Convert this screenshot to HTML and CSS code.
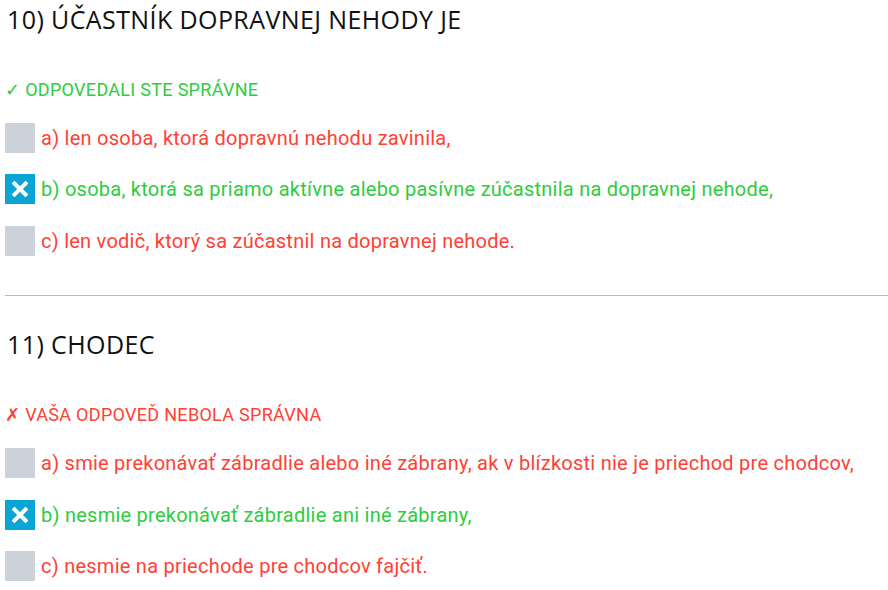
FILE: index.html
```html
<!DOCTYPE html>
<html lang="sk">
<head>
<meta charset="utf-8">
<link rel="stylesheet" href="styles.css">
</head>
<body>
<div class="page">
  <section class="question">
    <h2 class="q-title">10) ÚČASTNÍK DOPRAVNEJ NEHODY JE</h2>
    <div class="status ok"><span class="mark">✓</span> ODPOVEDALI STE SPRÁVNE</div>
    <ul class="answers">
      <li class="answer wrong"><span class="box"></span><span class="txt">a) len osoba, ktorá dopravnú nehodu zavinila,</span></li>
      <li class="answer right"><span class="box checked"><svg viewBox="0 0 30 30" width="30" height="30"><path d="M9.5 9.5 L20.5 20.5 M20.5 9.5 L9.5 20.5" stroke="#fff" stroke-width="4" stroke-linecap="square"/></svg></span><span class="txt">b) osoba, ktorá sa priamo aktívne alebo pasívne zúčastnila na dopravnej nehode,</span></li>
      <li class="answer wrong"><span class="box"></span><span class="txt">c) len vodič, ktorý sa zúčastnil na dopravnej nehode.</span></li>
    </ul>
  </section>
  <hr class="divider">
  <section class="question second">
    <h2 class="q-title">11) CHODEC</h2>
    <div class="status bad"><span class="mark">✗</span> VAŠA ODPOVEĎ NEBOLA SPRÁVNA</div>
    <ul class="answers">
      <li class="answer wrong"><span class="box"></span><span class="txt">a) smie prekonávať zábradlie alebo iné zábrany, ak v blízkosti nie je priechod pre chodcov,</span></li>
      <li class="answer right"><span class="box checked"><svg viewBox="0 0 30 30" width="30" height="30"><path d="M9.5 9.5 L20.5 20.5 M20.5 9.5 L9.5 20.5" stroke="#fff" stroke-width="4" stroke-linecap="square"/></svg></span><span class="txt">b) nesmie prekonávať zábradlie ani iné zábrany,</span></li>
      <li class="answer wrong"><span class="box"></span><span class="txt">c) nesmie na priechode pre chodcov fajčiť.</span></li>
    </ul>
  </section>
</div>
</body>
</html>
```

FILE: styles.css
```css
html, body {
  margin: 0;
  padding: 0;
  background: #fff;
}
.page {
  padding: 1.5px 0 0 5px;
}
.question {
  display: flex;
  flex-direction: column;
}
.q-title {
  font-family: "Open Sans", sans-serif;
  font-weight: 400;
  font-size: 25px;
  line-height: 34px;
  letter-spacing: 0.4px;
  color: #111;
  margin: 0 0 0 2px;
}
.second .q-title {
  margin-top: 31.5px;
}
.status {
  font-family: Roboto, sans-serif;
  font-size: 18px;
  line-height: 20px;
  height: 20px;
  margin-top: 44px;
  letter-spacing: 0.3px;
  white-space: nowrap;
}
.mark {
  font-family: "DejaVu Sans", sans-serif;
  font-size: 18px;
  line-height: 1;
}
.status.ok { color: #2ecc40; }
.status.bad { color: #ff4136; }
.answers {
  list-style: none;
  margin: 23px 0 0 0;
  padding: 0;
  display: flex;
  flex-direction: column;
  gap: 21.5px;
}
.answer {
  display: flex;
  align-items: center;
  gap: 6px;
  font-family: Roboto, sans-serif;
  font-size: 20px;
  line-height: 30px;
  letter-spacing: 0.25px;
}
.answer.wrong { color: #ff4136; }
.answer.right { color: #2ecc40; }
.box {
  width: 30px;
  height: 30px;
  flex: none;
  background: #ccd2da;
  display: block;
}
.box.checked {
  background: #0ba5d5;
}
.box svg { display: block; }
.divider {
  border: 0;
  border-top: 1px solid #bbbbbb;
  margin: 39px 0 0 0;
}
```
